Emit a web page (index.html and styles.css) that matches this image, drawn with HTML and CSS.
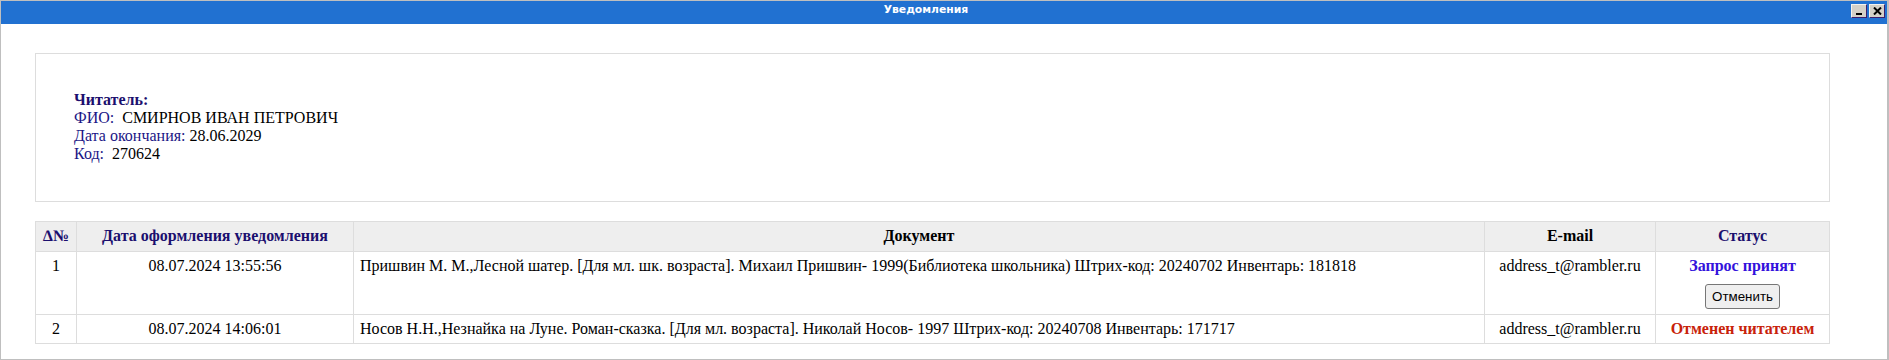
FILE: index.html
```html
<!DOCTYPE html>
<html lang="ru">
<head>
  <meta charset="UTF-8">
  <meta name="viewport" content="width=device-width, initial-scale=1.0">
  <title>Уведомления</title>
  <link rel="stylesheet" href="styles.css">
</head>
<body>
  <div class="window">
    <div class="title-bar">
      <span class="title-text">Уведомления</span>
      <div class="title-buttons">
        <span class="win-btn win-min"><span class="min-bar"></span></span>
        <span class="win-btn win-close">
          <svg width="9" height="8" viewBox="0 0 9 8">
            <path d="M1 0.5 L8 7.5 M8 0.5 L1 7.5" stroke="#000" stroke-width="2" fill="none"/>
          </svg>
        </span>
      </div>
    </div>

    <div class="window-content">
      <div class="reader-box">
        <div class="reader-title">Читатель:</div>
        <div><span class="label">ФИО:</span>&nbsp; СМИРНОВ ИВАН ПЕТРОВИЧ</div>
        <div><span class="label">Дата окончания:</span> 28.06.2029</div>
        <div><span class="label">Код:</span>&nbsp; 270624</div>
      </div>

      <table class="notes-table">
        <colgroup>
          <col class="col-num">
          <col class="col-date">
          <col class="col-doc">
          <col class="col-mail">
          <col class="col-status">
        </colgroup>
        <thead>
          <tr>
            <th class="th-navy">&#8710;№</th>
            <th class="th-navy">Дата оформления уведомления</th>
            <th>Документ</th>
            <th>E-mail</th>
            <th class="th-navy">Статус</th>
          </tr>
        </thead>
        <tbody>
          <tr>
            <td>1</td>
            <td>08.07.2024 13:55:56</td>
            <td class="doc">Пришвин М. М.,Лесной шатер. [Для мл. шк. возраста]. Михаил Пришвин- 1999(Библиотека школьника) Штрих-код: 20240702 Инвентарь: 181818</td>
            <td>address_t@rambler.ru</td>
            <td>
              <div class="status-ok">Запрос принят</div>
              <button class="cancel-button">Отменить</button>
            </td>
          </tr>
          <tr>
            <td>2</td>
            <td>08.07.2024 14:06:01</td>
            <td class="doc">Носов Н.Н.,Незнайка на Луне. Роман-сказка. [Для мл. возраста]. Николай Носов- 1997 Штрих-код: 20240708 Инвентарь: 171717</td>
            <td>address_t@rambler.ru</td>
            <td><div class="status-cancel">Отменен читателем</div></td>
          </tr>
        </tbody>
      </table>
    </div>
  </div>
</body>
</html>
```

FILE: styles.css
```css
/* Notifications window */

body {
  margin: 0;
  padding: 0;
  background-color: #fff;
  font-family: "Liberation Serif", "Times New Roman", serif;
  font-size: 16px;
  color: #000;
}

.window {
  height: 360px;
  box-sizing: border-box;
  border-top: 1px solid #bfbfbf;
  border-left: 1px solid #bfbfbf;
  border-right: 2px solid #bfbfbf;
  border-bottom: 1px solid #bfbfbf;
  overflow: hidden;
}

/* Title bar */

.title-bar {
  height: 23px;
  background-color: #2171d1;
  display: flex;
  align-items: flex-start;
}

.title-text {
  flex: 1;
  text-align: center;
  color: #fff;
  font-family: "DejaVu Sans", Verdana, sans-serif;
  font-weight: bold;
  font-size: 10.8px;
  line-height: 13px;
  padding-top: 2px;
}

.title-buttons {
  display: flex;
  gap: 2px;
  margin-top: 3px;
  margin-right: 2px;
}

.win-btn {
  width: 14px;
  height: 12px;
  background-color: #d4d0c8;
  border-top: 1px solid #f4f2ee;
  border-left: 1px solid #f4f2ee;
  border-right: 1px solid #3c1f6e;
  border-bottom: 1px solid #3c1f6e;
  display: flex;
  align-items: center;
  justify-content: center;
  position: relative;
}

.min-bar {
  position: absolute;
  left: 4px;
  bottom: 2px;
  width: 6px;
  height: 2px;
  background-color: #000;
}

/* Content */

.window-content {
  padding: 29px 57px 0 34px;
}

.reader-box {
  border: 1px solid #dddddd;
  padding: 37px 38px 38px;
}

.reader-title {
  font-weight: bold;
  color: #1b0f6e;
}

.label {
  color: #1b1686;
}

/* Table */

.notes-table {
  width: 100%;
  margin-top: 19px;
  border-collapse: collapse;
  table-layout: fixed;
}

.col-num { width: 41px; }
.col-date { width: 277px; }
.col-mail { width: 171px; }
.col-status { width: 174px; }

.notes-table th,
.notes-table td {
  border: 1px solid #dddddd;
  padding: 5px 6px;
  text-align: center;
  vertical-align: top;
  line-height: 18px;
}

.notes-table th {
  background-color: #eeeeee;
  font-weight: bold;
  color: #000;
  padding-bottom: 6px;
}

.notes-table th.th-navy {
  color: #1b0f6e;
}

.notes-table td.doc {
  text-align: left;
}

.status-ok {
  font-weight: bold;
  color: #3312dc;
}

.status-cancel {
  font-weight: bold;
  color: #c8220a;
}

.cancel-button {
  display: block;
  margin: 9px auto 0;
  height: 25px;
  padding: 1px 6px;
  font-family: "Liberation Sans", Arial, sans-serif;
  font-size: 13.33px;
  color: #000;
  background-color: #efefef;
  border: 1px solid #767676;
  border-radius: 3px;
}
```
